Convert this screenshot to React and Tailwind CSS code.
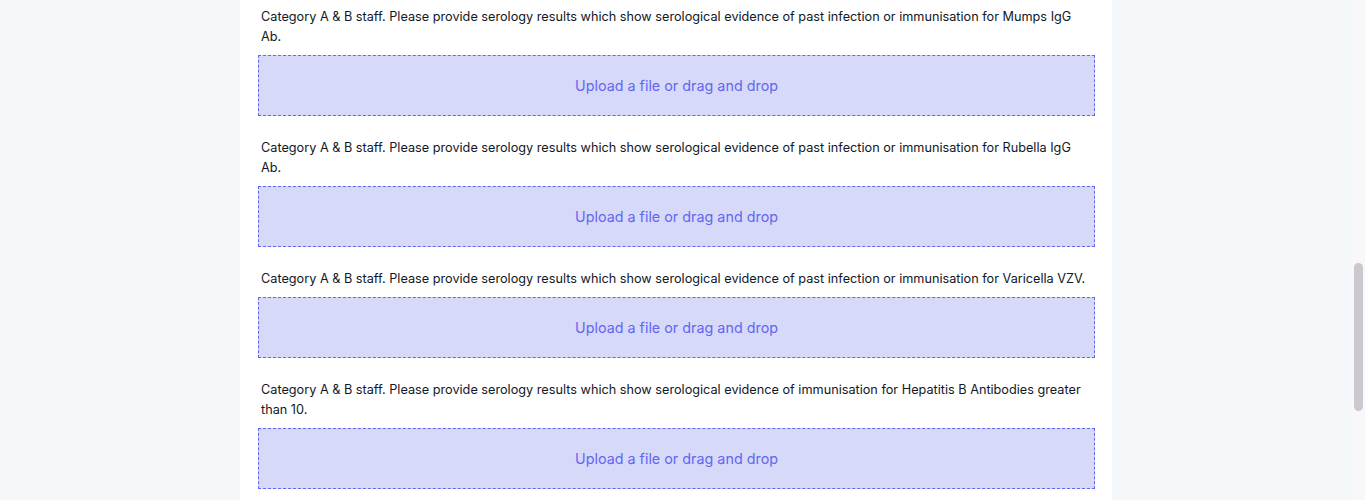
import React from 'react';

const items = [
  'Category A & B staff. Please provide serology results which show serological evidence of past infection or immunisation for Mumps IgG Ab.',
  'Category A & B staff. Please provide serology results which show serological evidence of past infection or immunisation for Rubella IgG Ab.',
  'Category A & B staff. Please provide serology results which show serological evidence of past infection or immunisation for Varicella VZV.',
  'Category A & B staff. Please provide serology results which show serological evidence of immunisation for Hepatitis B Antibodies greater than 10.',
];

function UploadField({ label }) {
  return (
    <div className="flex flex-col gap-[8px]">
      <p className="px-[3px] text-[12.7px] leading-[20px] text-[#111827]">{label}</p>
      <label className="flex h-[61px] cursor-pointer items-center justify-center border border-dashed border-[#6366f1] bg-[#d7d9f9] text-[14.35px] text-[#6366f1]">
        Upload a file or drag and drop
      </label>
    </div>
  );
}

export default function App() {
  return (
    <div
      className="flex h-[500px] overflow-hidden bg-[#f5f8fb]"
      style={{ fontFamily: 'Inter, "Noto Sans", sans-serif' }}
    >
      <div className="flex flex-1 justify-center">
        <div className="w-[872px] bg-white pt-[7px] pl-[18px] pr-[17px]">
          <div className="flex flex-col gap-[22px]">
            {items.map((text, i) => (
              <UploadField key={i} label={text} />
            ))}
          </div>
        </div>
      </div>
      <div className="w-[13px] bg-[#f8f8fa] pt-[263px]">
        <div className="mx-auto h-[148px] w-[9px] rounded-full bg-[#cdc8d0]" />
      </div>
    </div>
  );
}
